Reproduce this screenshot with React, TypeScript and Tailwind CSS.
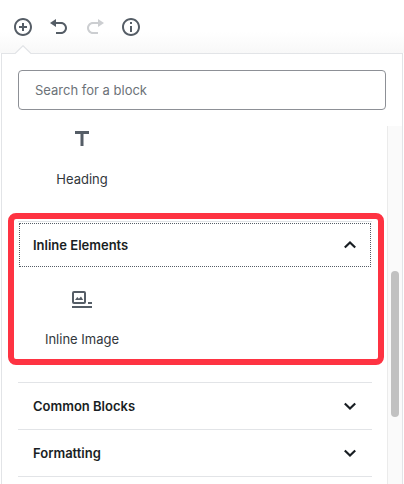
import type { ReactNode } from "react";
import clsx from "clsx";

const ICONS = {
    insert: "M10 1c-5 0-9 4-9 9s4 9 9 9 9-4 9-9-4-9-9-9zm0 16c-3.9 0-7-3.1-7-7s3.1-7 7-7 7 3.1 7 7-3.1 7-7 7zm1-11H9v3H6v2h3v3h2v-3h3V9h-3V6z",
    undo: "M12 5H7V2L1 6l6 4V7h5c2.2 0 4 1.8 4 4s-1.8 4-4 4H7v2h5c3.3 0 6-2.7 6-6s-2.7-6-6-6z",
    redo: "M8 5h5V2l6 4-6 4V7H8c-2.2 0-4 1.8-4 4s1.8 4 4 4h5v2H8c-3.3 0-6-2.7-6-6s2.7-6 6-6z",
    info: "M10 1c-5 0-9 4-9 9s4 9 9 9 9-4 9-9-4-9-9-9zm0 16c-3.9 0-7-3.1-7-7s3.1-7 7-7 7 3.1 7 7-3.1 7-7 7zM9 5h2v2H9V5zm0 4h2v6H9V9z",
};

interface ToolbarButtonProps {
    label: string;
    icon: keyof typeof ICONS;
    disabled?: boolean;
}

function ToolbarButton({ label, icon, disabled }: ToolbarButtonProps) {
    return (
        <button type="button" aria-label={label} disabled={disabled} className="text-[#555d66] disabled:text-[#ccced1]">
            <svg viewBox="0 0 20 20" className="w-5 h-5" fill="currentColor" aria-hidden="true">
                <path d={ICONS[icon]} />
            </svg>
        </button>
    );
}

function BlockTile({ label, children }: { label: string; children: ReactNode }) {
    return (
        <button type="button" className="w-24 flex flex-col items-center gap-[18px] text-[#32373c]">
            <svg viewBox="0 0 24 24" className="w-6 h-6 text-[#555d66]" fill="currentColor" aria-hidden="true">
                {children}
            </svg>
            <span className="leading-5">{label}</span>
        </button>
    );
}

interface PanelProps {
    title: string;
    open?: boolean;
    children?: ReactNode;
}

function Panel({ title, open, children }: PanelProps) {
    return (
        <section className="relative border-t border-[#e2e4e7]">
            <h2 className="flex p-px">
                <button
                    type="button"
                    aria-expanded={!!open}
                    className={clsx(
                        "flex-1 h-11 flex items-center justify-between pl-3.5 pr-3 font-semibold text-[#191e23]",
                        open && "outline-1 -outline-offset-1 outline-dotted outline-[#555d66]"
                    )}
                >
                    <span className="pt-0.5">{title}</span>
                    <svg viewBox="0 0 18 18" className="w-[18px] h-[18px]" fill="none" stroke="currentColor" strokeWidth="2.2" aria-hidden="true">
                        <path d={open ? "M3.8 11.5 9 6.5l5.2 5" : "M3.8 6.5 9 11.5l5.2-5"} />
                    </svg>
                </button>
            </h2>
            {open && <div className="px-4 pt-[19px] pb-[33px]">{children}</div>}
            {open && (
                <div className="absolute -left-2.5 -right-3 -top-[9px] bottom-[17px] border-6 border-[#fe3342] rounded-lg pointer-events-none" />
            )}
        </section>
    );
}

export default function App() {
    return (
        <div className="h-screen flex flex-col overflow-hidden bg-white font-['Inter',sans-serif] text-[13px]">
            <header className="shrink-0 h-[53px] px-[13px] pt-[17px] flex items-start gap-4 bg-linear-to-b from-white from-60% to-[#f8f8f8]">
                <ToolbarButton label="Add block" icon="insert" />
                <ToolbarButton label="Undo" icon="undo" />
                <ToolbarButton label="Redo" icon="redo" disabled />
                <ToolbarButton label="Content structure" icon="info" />
            </header>

            <div className="relative flex-1 min-h-0 mx-px flex flex-col bg-white border border-b-0 border-[#e2e4e7]">
                <svg viewBox="0 0 16 9" className="absolute left-[13px] -top-[9px] w-4 h-[9px]" aria-hidden="true">
                    <path d="M0 9 8 1l8 8z" fill="#fff" />
                    <path d="M0 8.5 8 .7l8 7.8" fill="none" stroke="#e2e4e7" strokeWidth="1.2" />
                </svg>

                <div className="p-4">
                    <input
                        type="search"
                        aria-label="Search for a block"
                        placeholder="Search for a block"
                        className="block w-full h-10 px-4 rounded border border-[#8d9096] text-[#32373c] placeholder:text-[#6c7278]"
                    />
                </div>

                <div className="flex-1 min-h-0 flex">
                    <div className="flex-1 pl-4 pr-[15px]">
                        <div className="px-4 pt-px pb-8">
                            <BlockTile label="Heading">
                                <path d="M5 4v3h5.5v12h3V7H19V4z" />
                            </BlockTile>
                        </div>
                        <Panel title="Inline Elements" open>
                            <BlockTile label="Inline Image">
                                <path
                                    fillRule="evenodd"
                                    d="M4 4h10a2 2 0 0 1 2 2v9a2 2 0 0 1-2 2H4a2 2 0 0 1-2-2V6a2 2 0 0 1 2-2zm0 2v9h10V6z"
                                />
                                <path d="M5 13l2.3-3 1.6 1.8L11 9.5l2.2 3.5zM18 15h4v2h-4zM2 19h20v2H2z" />
                            </BlockTile>
                        </Panel>
                        <Panel title="Common Blocks" />
                        <Panel title="Formatting" />
                        <div className="border-t border-[#e2e4e7]" />
                    </div>
                    <div className="w-[15px] border-l border-[#ebebeb] bg-[#fafafa] pl-[3px] pt-[145px]">
                        <div className="w-2 h-[146px] rounded-full bg-[#c1c1c1]" />
                    </div>
                </div>
            </div>
        </div>
    );
}
